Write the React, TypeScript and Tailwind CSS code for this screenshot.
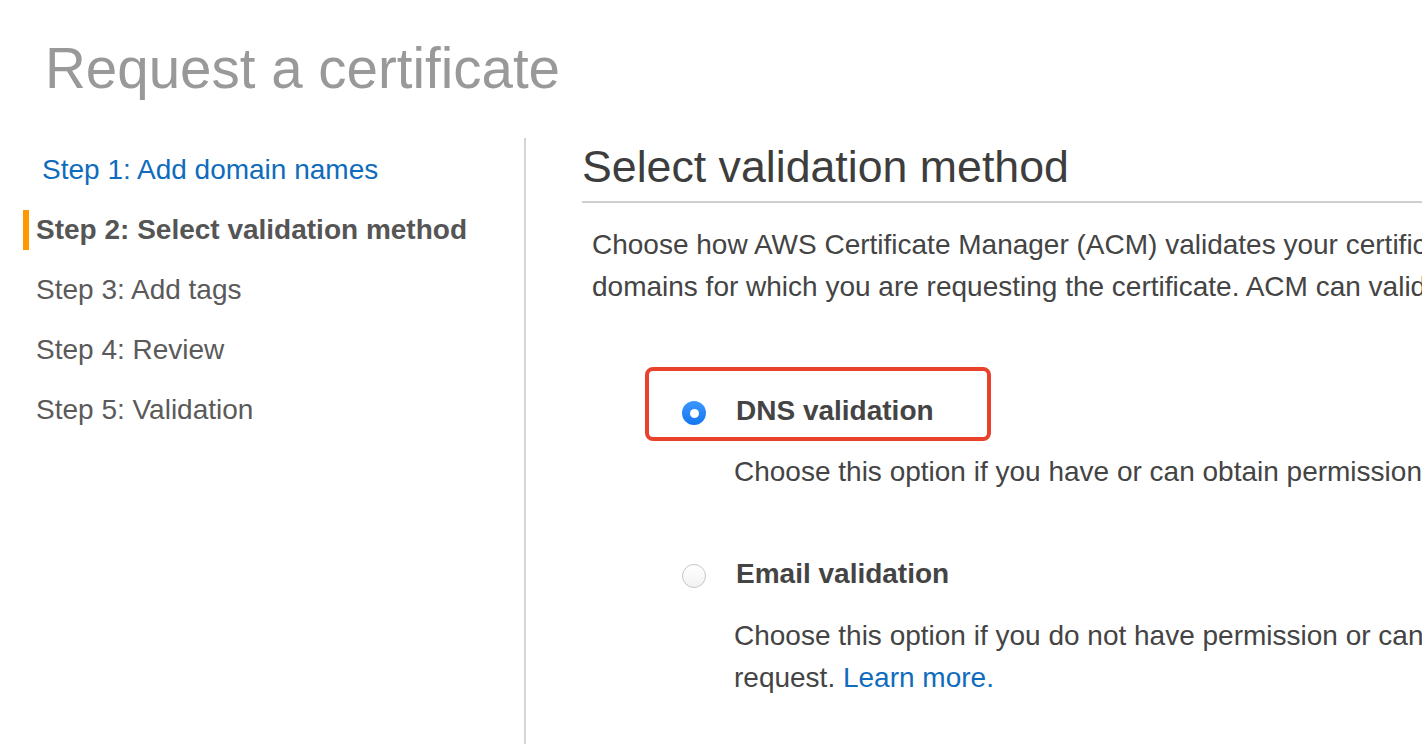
const steps = [
  { label: "Step 1: Add domain names", state: "done" },
  { label: "Step 2: Select validation method", state: "active" },
  { label: "Step 3: Add tags", state: "todo" },
  { label: "Step 4: Review", state: "todo" },
  { label: "Step 5: Validation", state: "todo" },
];

function StepNav() {
  return (
    <nav className="w-[524px] shrink-0 pt-[2px]">
      {steps.map((s) => (
        <div key={s.label} className="flex h-[60px] items-center">
          <span
            className={
              s.state === "active"
                ? "ml-[23px] mr-[7px] h-[40px] w-[6px] shrink-0 bg-[#ff9900]"
                : "ml-[23px] mr-[7px] h-[40px] w-[6px] shrink-0"
            }
          />
          {s.state === "done" && (
            <a className="pl-[6px] text-[28px] leading-[60px] text-[#0f6cbd]">{s.label}</a>
          )}
          {s.state === "active" && (
            <span className="text-[28px] font-bold leading-[60px] text-[#555555]">{s.label}</span>
          )}
          {s.state === "todo" && (
            <span className="text-[28px] leading-[60px] text-[#5a5a5a]">{s.label}</span>
          )}
        </div>
      ))}
    </nav>
  );
}

function Radio({ checked }: { checked: boolean }) {
  if (checked) {
    return (
      <span className="flex h-[24px] w-[24px] shrink-0 items-center justify-center rounded-full bg-gradient-to-b from-[#3a96ff] to-[#1476f0]">
        <span className="block h-[9px] w-[9px] rounded-full bg-white" />
      </span>
    );
  }
  return (
    <span className="block h-[24px] w-[24px] shrink-0 rounded-full border border-[#c6c6c6] bg-gradient-to-b from-white to-[#f2f2f2]" />
  );
}

export default function App() {
  return (
    <div className="h-[744px] w-[1422px] overflow-hidden bg-white font-['Liberation_Sans',Arial,sans-serif] text-[#444444]">
      <h1 className="pl-[45px] pt-[35px] text-[56.5px] leading-[67px] text-[#999999]">Request a certificate</h1>

      <div className="mt-[36px] flex h-[606px]">
        <StepNav />
        <div className="w-[2px] shrink-0 bg-[#d5d5d5]" />

        <main className="ml-[56px] w-[1400px] shrink-0">
          <h2 className="mt-[3px] text-[44.7px] leading-[52px] text-[#3d3d3d]">Select validation method</h2>
          <div className="mt-[8px] h-[2px] w-[840px] bg-[#cfcfcf]" />

          <p className="mt-[21px] whitespace-nowrap pl-[10px] text-[28px] leading-[42px]">
            Choose how AWS Certificate Manager (ACM) validates your certificate request. Before we issue a certificate, ACM must validate that you own or control each of the
            <br />
            domains for which you are requesting the certificate. ACM can validate ownership by using DNS or by sending email to the contact addresses of the domain.
          </p>

          <div className="relative mt-[82px] flex h-[42px] items-center pl-[100px]">
            <div className="absolute left-[63px] top-[-23px] h-[74px] w-[346px] rounded-[8px] border-[4px] border-[#e8412c]" />
            <div className="mt-[4px]">
              <Radio checked />
            </div>
            <span className="ml-[30px] text-[28px] font-bold leading-[42px] text-[#444444]">DNS validation</span>
          </div>
          <p className="mt-[19px] whitespace-nowrap pl-[152px] text-[28px] leading-[42px]">
            Choose this option if you have or can obtain permission to modify the DNS configuration for the domains in your certificate request.{" "}
            <a className="text-[#0f6cbd]">Learn more.</a>
          </p>

          <div className="mt-[60px] flex h-[42px] items-center pl-[100px]">
            <div className="mt-[3px]">
              <Radio checked={false} />
            </div>
            <span className="ml-[30px] text-[28px] font-bold leading-[42px] text-[#444444]">Email validation</span>
          </div>
          <p className="mt-[20px] whitespace-nowrap pl-[152px] text-[28px] leading-[42px]">
            Choose this option if you do not have permission or cannot obtain permission to modify the DNS configuration for the domains in your certificate
            <br />
            request. <a className="text-[#0f6cbd]">Learn more.</a>
          </p>
        </main>
      </div>
    </div>
  );
}
